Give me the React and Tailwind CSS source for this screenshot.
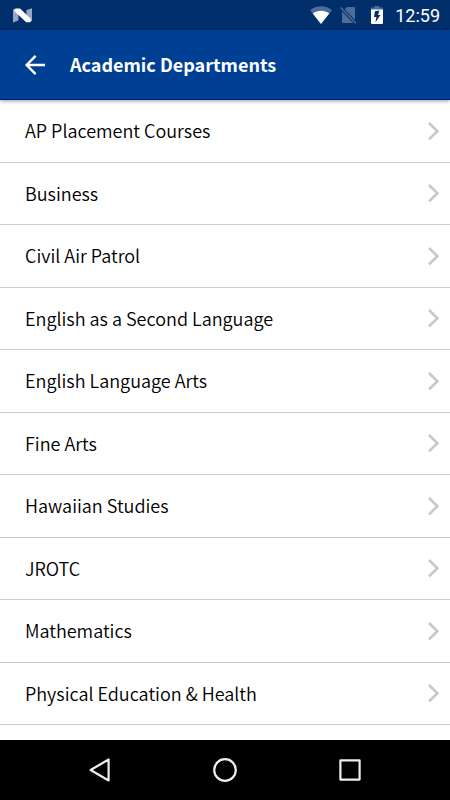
import React from 'react';

const departments = [
  'AP Placement Courses',
  'Business',
  'Civil Air Patrol',
  'English as a Second Language',
  'English Language Arts',
  'Fine Arts',
  'Hawaiian Studies',
  'JROTC',
  'Mathematics',
  'Physical Education & Health',
];

const StatusBar = () => (
  <div className="flex h-[30px] shrink-0 items-center justify-between bg-[#002f6c] pl-[13px] pr-[10px] text-white">
    <svg width="19" height="15" viewBox="0 0 19 15" aria-hidden="true">
      <path d="M0 1.6 L2 0.8 L5.4 3 V12.6 L0 14.6 Z" fill="#93a8c4" />
      <path d="M19 0.2 V13 L17 14 L13.4 11 V2 Z" fill="#93a8c4" />
      <path d="M2.4 0.4 H7 L18 11 L17.2 14.2 H13.2 L1.2 3 Z" fill="#fff" />
    </svg>
    <div className="flex items-center">
      <svg width="22" height="18" viewBox="0 0 22 18" aria-hidden="true">
        <path d="M11 18 L0 4.2 C6 -1.2 16 -1.2 22 4.2 Z" fill="#4d6d98" />
        <path d="M11 18 L2.8 7.6 C7.5 3.8 14.5 3.8 19.2 7.6 Z" fill="#fff" />
      </svg>
      <svg className="ml-2" width="17" height="18" viewBox="0 0 17 18" aria-hidden="true">
        <path d="M6.8 1 H14 Q15 1 15 2 V14 L4.6 3.2 Z" fill="#4d6d98" />
        <path d="M2 5.4 L13.2 17 H3 Q2 17 2 16 Z" fill="#4d6d98" />
        <path d="M0.6 1.6 L15.8 17.2" stroke="#4d6d98" strokeWidth="1.5" />
      </svg>
      <svg className="ml-[14px]" width="12" height="18" viewBox="0 0 12 18" aria-hidden="true">
        <path d="M3.5 0 H8.5 V1.6 H12 V4 H0 V1.6 H3.5 Z" fill="#4d6d98" />
        <path d="M0 3.5 H12 V17 Q12 18 11 18 H1 Q0 18 0 17 Z" fill="#fff" />
        <path d="M8.4 4.4 L4 5.2 L3 11 H5.4 L4.4 16.4 L9.4 9 H7 Z" fill="#002f6c" />
      </svg>
      <span className="ml-3 pt-0.5 font-[Roboto,sans-serif] text-[18px] leading-7">12:59</span>
    </div>
  </div>
);

const Header = () => (
  <header className="relative z-10 flex h-[70px] shrink-0 items-center border-b border-[#001a8c] bg-[#004094] pl-[25px] text-white shadow-[0_1px_4px_rgba(0,0,0,0.4)]">
    <button type="button" aria-label="Back" className="shrink-0">
      <svg width="20" height="20" viewBox="0 0 20 20" fill="none" stroke="#fff" strokeWidth="2.4">
        <path d="M20 10 H2 M10.6 0.9 L1.6 10 L10.6 19.1" />
      </svg>
    </button>
    <h1 className="pb-0.5 pl-[25px] text-[18px] font-bold leading-6">Academic Departments</h1>
  </header>
);

const DepartmentRow = ({ name }) => (
  <li className="flex flex-1 border-b border-[#cccccc]">
    <a href="#" className="flex flex-1 items-center justify-between pl-[25px] pr-[11px]">
      <span className="pb-px text-[18px] font-[350] leading-6">{name}</span>
      <svg width="11" height="18" viewBox="0 0 11 18" fill="none" stroke="#c8c8c8" strokeWidth="2.6" aria-hidden="true">
        <path d="M1 1 L9.4 9.2 L1 17.4" />
      </svg>
    </a>
  </li>
);

const NavBar = () => (
  <nav className="flex h-[60px] shrink-0 items-center justify-center gap-[101px] bg-black">
    <button type="button" aria-label="Back">
      <svg width="24" height="24" viewBox="0 0 24 24" fill="none" stroke="#eee" strokeWidth="2.2" strokeLinejoin="round">
        <path d="M20.6 1.5 V22.5 L2.6 12 Z" />
      </svg>
    </button>
    <button type="button" aria-label="Home">
      <svg width="24" height="24" viewBox="0 0 24 24" fill="none" stroke="#eee" strokeWidth="2.2">
        <circle cx="12" cy="12" r="10.8" />
      </svg>
    </button>
    <button type="button" aria-label="Recent apps">
      <svg width="24" height="24" viewBox="0 0 24 24" fill="none" stroke="#eee" strokeWidth="2.2" strokeLinejoin="round">
        <rect x="2.4" y="2.4" width="19.2" height="19.2" />
      </svg>
    </button>
  </nav>
);

const App = () => {
  return (
    <div className="flex min-h-screen flex-col bg-white font-['Noto_Sans_CJK_JP',sans-serif] text-black">
      <StatusBar />
      <Header />
      <main className="flex flex-1 flex-col pb-[15px]">
        <ul className="flex flex-1 flex-col">
          {departments.map((name) => (
            <DepartmentRow key={name} name={name} />
          ))}
        </ul>
      </main>
      <NavBar />
    </div>
  );
};

export default App;
